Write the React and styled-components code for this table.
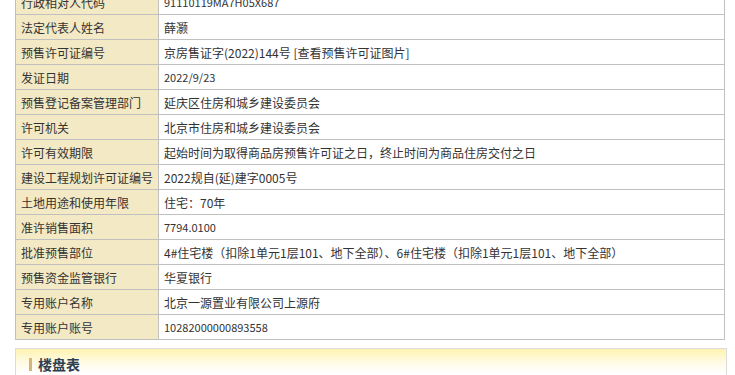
import React from "react";
import styled, { createGlobalStyle } from "styled-components";

const Global = createGlobalStyle`
  html, body { margin: 0; padding: 0; background: #fff; }
  body { font-family: "Noto Sans CJK SC", "Noto Sans", sans-serif; color: #333; overflow: hidden; }
`;

const Page = styled.div`
  padding: 0 10px 0 15px;
  margin-top: -11px;
`;

const InfoTable = styled.div`
  width: 710px;
  box-sizing: border-box;
  border: 1px solid #c0c0c0;
  border-bottom: none;
`;

const Row = styled.div`
  display: flex;
  height: 25px;
  box-sizing: border-box;
  border-bottom: 1px solid #c0c0c0;
`;

const Label = styled.div`
  width: 143px;
  flex: none;
  box-sizing: border-box;
  border-right: 1px solid #c0c0c0;
  background: #f3e9c4;
  padding-left: 5px;
  display: flex;
  align-items: center;
  font-size: 12px;
  color: #333;
  white-space: nowrap;
`;

const Value = styled.div`
  flex: 1;
  padding-left: 5px;
  display: flex;
  align-items: center;
  font-size: ${(p) => (p.$num ? "11px" : "12px")};
  color: #333;
  white-space: nowrap;
`;

const Panel = styled.div`
  margin-top: 8px;
  width: 712px;
  height: 40px;
  box-sizing: border-box;
  border: 1px solid #dcdcdc;
  border-bottom: none;
  background: linear-gradient(#fff3b0 0px, #fffadf 12px, #ffffff 24px);
  padding: 8px 0 0 13px;
`;

const Title = styled.h3`
  margin: 0;
  display: flex;
  align-items: center;
  gap: 6px;
  font-size: 14px;
  font-weight: bold;
  color: #2f3f52;
  line-height: 14px;
  &::before {
    content: "";
    display: block;
    width: 3px;
    height: 13px;
    background: #d7b47a;
  }
`;

const rows = [
  ["行政相对人代码", "91110119MA7H05X687", true],
  ["法定代表人姓名", "薛灏"],
  ["预售许可证编号", "京房售证字(2022)144号 [查看预售许可证图片]"],
  ["发证日期", "2022/9/23", true],
  ["预售登记备案管理部门", "延庆区住房和城乡建设委员会"],
  ["许可机关", "北京市住房和城乡建设委员会"],
  ["许可有效期限", "起始时间为取得商品房预售许可证之日，终止时间为商品住房交付之日"],
  ["建设工程规划许可证编号", "2022规自(延)建字0005号"],
  ["土地用途和使用年限", "住宅：70年"],
  ["准许销售面积", "7794.0100", true],
  ["批准预售部位", "4#住宅楼（扣除1单元1层101、地下全部）、6#住宅楼（扣除1单元1层101、地下全部）"],
  ["预售资金监管银行", "华夏银行"],
  ["专用账户名称", "北京一源置业有限公司上源府"],
  ["专用账户账号", "10282000000893558", true],
];

export default function App() {
  return (
    <>
      <Global />
      <Page>
        <InfoTable>
          {rows.map(([k, v, num]) => (
            <Row key={k}>
              <Label>{k}</Label>
              <Value $num={num}>{v}</Value>
            </Row>
          ))}
        </InfoTable>
        <Panel>
          <Title>楼盘表</Title>
        </Panel>
      </Page>
    </>
  );
}
